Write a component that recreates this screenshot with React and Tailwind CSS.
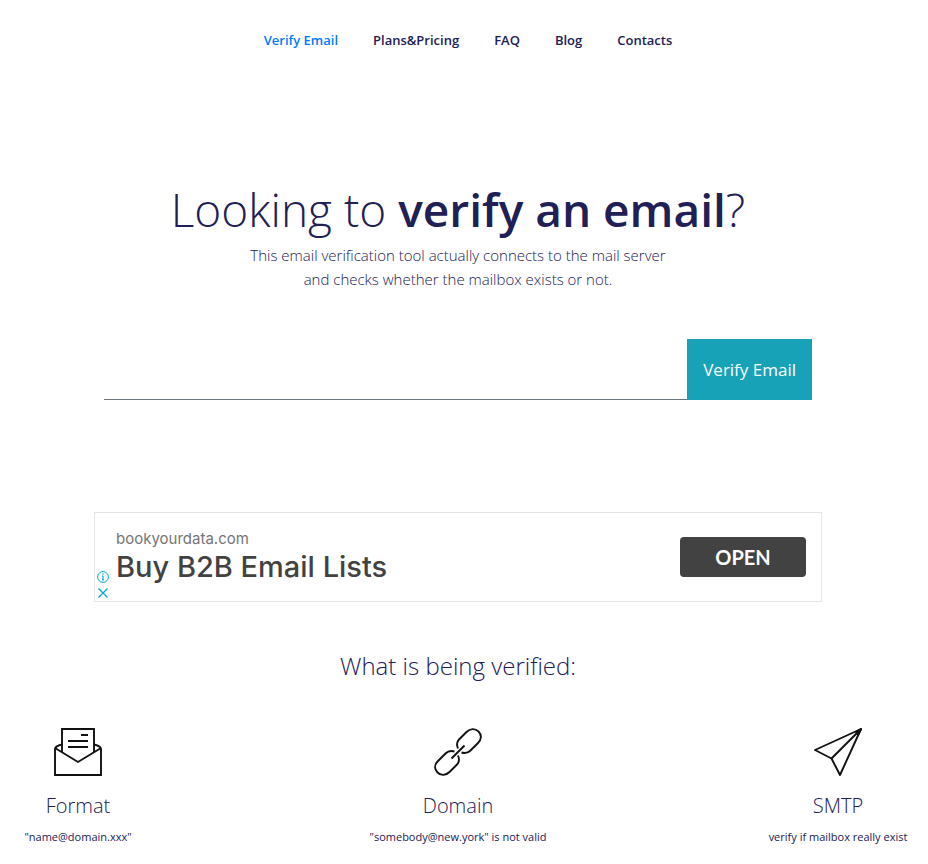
import React, { useState } from 'react';

const links = ['Verify Email', 'Plans&Pricing', 'FAQ', 'Blog', 'Contacts'];

function EnvelopeIcon() {
  return (
    <svg viewBox="0 0 48 48" className="h-12 w-12" fill="none" stroke="#111" strokeWidth="1.9" aria-hidden="true">
      <path d="M8 24V1h32v23" />
      <path d="M8 16.500C4 17.500 1 18.500 1 21V47h46V21C47 18.500 44 17.500 40 16.500" />
      <path d="M1 20 24 34 47 20" />
      <path d="M27 7h7M14 13h20M14 19h20" />
    </svg>
  );
}

function ChainIcon() {
  return (
    <svg viewBox="0 0 48 48" className="h-12 w-12" fill="none" stroke="#111" strokeWidth="1.9" aria-hidden="true">
      <path d="M24 20.500C22.500 17 23 13.500 25 11.500L32.500 4C36 .5 41 0 44.500 3.500C48 7 47.500 11.500 44 15L36.500 22.500C34 25 31 25.500 27.500 24.500" />
      <path d="M20.500 23.500C17 22.500 14 23 11.500 25.500L4 33C.5 36.500 0 41 3.500 44.500C7 48 12 47.500 15.500 44L23 36.500C25 34.500 25.500 31 24 27.500" />
      <path d="M17.500 30.500 30.500 17.500" />
    </svg>
  );
}

function PlaneIcon() {
  return (
    <svg viewBox="0 0 48 48" className="h-12 w-12" fill="none" stroke="#111" strokeWidth="1.9" strokeLinejoin="round" aria-hidden="true">
      <path d="M47 1 1 22 17.500 30.500 26 47z" />
      <path d="M47 1 17.500 30.500" />
      <path d="M47 1 42 4 44 7z" fill="#111" />
    </svg>
  );
}

const checks = [
  { title: 'Format', text: '"name@domain.xxx"', icon: <EnvelopeIcon /> },
  { title: 'Domain', text: '"somebody@new.york" is not valid', icon: <ChainIcon /> },
  { title: 'SMTP', text: 'verify if mailbox really exist', icon: <PlaneIcon /> },
];

function Navbar() {
  return (
    <nav className="flex justify-center gap-[35px] pt-[30px] pl-2 text-[13px] leading-5 font-semibold">
      {links.map((link, index) => (
        <a key={link} href="#" className={index === 0 ? 'text-[#007bff]' : 'text-[#212056]'}>
          {link}
        </a>
      ))}
    </nav>
  );
}

function VerifyForm() {
  const [email, setEmail] = useState('');

  return (
    <form onSubmit={(e) => e.preventDefault()} className="mx-auto mt-12 flex h-[61px] w-full max-w-[708px]">
      <input
        type="email"
        aria-label="Email"
        value={email}
        onChange={(e) => setEmail(e.target.value)}
        className="min-w-0 flex-1 border-b border-[#6c757d] px-3 text-[17px] outline-none"
      />
      <button type="submit" className="bg-[#17a2b8] px-4 text-[17px] text-white">
        Verify Email
      </button>
    </form>
  );
}

function AdBanner() {
  return (
    <aside className="relative mx-auto mt-28 flex h-[90px] w-full max-w-[728px] items-center justify-between border border-[#e4e4e4] pr-[15px] pl-[21px] font-['Inter',sans-serif]">
      <div>
        <p className="text-[15px] leading-5 text-[#757575]">bookyourdata.com</p>
        <p className="text-[29px] leading-9 font-medium text-[#424242]">Buy B2B Email Lists</p>
      </div>
      <button type="button" className="h-10 w-[126px] rounded bg-[#424242] font-['Lato',sans-serif] text-xl font-bold text-white">
        OPEN
      </button>
      <div className="absolute bottom-0.5 left-0.5 flex flex-col gap-1">
        <svg viewBox="0 0 12 12" className="h-3 w-3" fill="none" stroke="#00aecd" aria-hidden="true">
          <circle cx="6" cy="6" r="5.400" />
          <path d="M6 5v4M5 5h1M5 9h2M6 2.500v1.200" strokeWidth="1.200" />
        </svg>
        <svg viewBox="0 0 12 12" className="h-3 w-3" fill="none" stroke="#00aecd" strokeWidth="1.300" aria-hidden="true">
          <path d="M1.500 1.500l9 9M10.500 1.500l-9 9" />
        </svg>
      </div>
    </aside>
  );
}

function App() {
  return (
    <div className="bg-white pb-4 font-['Open_Sans','Noto_Sans',sans-serif] text-[#212056]">
      <Navbar />
      <main className="pr-3">
        <h1 className="mt-[130px] text-center text-[46px] leading-[58px] font-light">
          Looking to <strong className="font-semibold">verify an email</strong>?
        </h1>
        <p className="mt-[5px] text-center text-[15px] leading-6 font-light">
          This email verification tool actually connects to the mail server
          <br />
          and checks whether the mailbox exists or not.
        </p>
        <VerifyForm />
        <AdBanner />
        <h2 className="mt-[46px] text-center text-2xl leading-9 font-light">What is being verified:</h2>
        <div className="mt-11 flex justify-between px-1.5">
          {checks.map((check) => (
            <section key={check.title} className="flex w-36 flex-col items-center whitespace-nowrap">
              {check.icon}
              <h3 className="mt-4 text-xl leading-7 font-light">{check.title}</h3>
              <p className="mt-[7px] text-[11px] leading-5">{check.text}</p>
            </section>
          ))}
        </div>
      </main>
    </div>
  );
}

export default App;
